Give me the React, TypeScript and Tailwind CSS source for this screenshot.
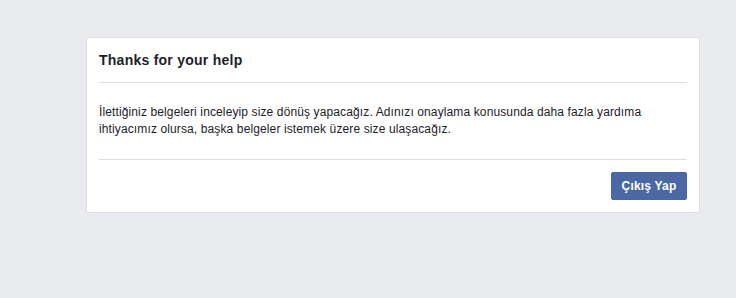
export default function App() {
  return (
    <div
      className="min-h-[298px] w-[736px] bg-[#e9ebee] pt-[37px] pl-[86px]"
      style={{ fontFamily: '"Liberation Sans", Arial, Helvetica, sans-serif' }}
    >
      <div className="w-[614px] rounded-[3px] border border-[#dddfe2] bg-white">
        <div className="mx-[12px] border-b border-[#dadde1] py-[13px]">
          <h2 className="text-[14px] font-bold leading-[18px] tracking-[0.25px] text-[#1d2129]">Thanks for your help</h2>
        </div>
        <div className="mx-[12px] border-b border-[#dadde1] py-[21px]">
          <p className="text-[12px] leading-[17px] tracking-[0.12px] text-[#1d2129]">
            İlettiğiniz belgeleri inceleyip size dönüş yapacağız. Adınızı onaylama konusunda daha fazla yardıma
            ihtiyacımız olursa, başka belgeler istemek üzere size ulaşacağız.
          </p>
        </div>
        <div className="mx-[12px] flex justify-end py-[12px]">
          <button className="flex h-[28px] w-[76px] items-center justify-center rounded-[2px] border border-[#4267b2] bg-[#4b67a4] text-[12px] font-bold tracking-[0.2px] text-white">
            Çıkış Yap
          </button>
        </div>
      </div>
    </div>
  );
}
